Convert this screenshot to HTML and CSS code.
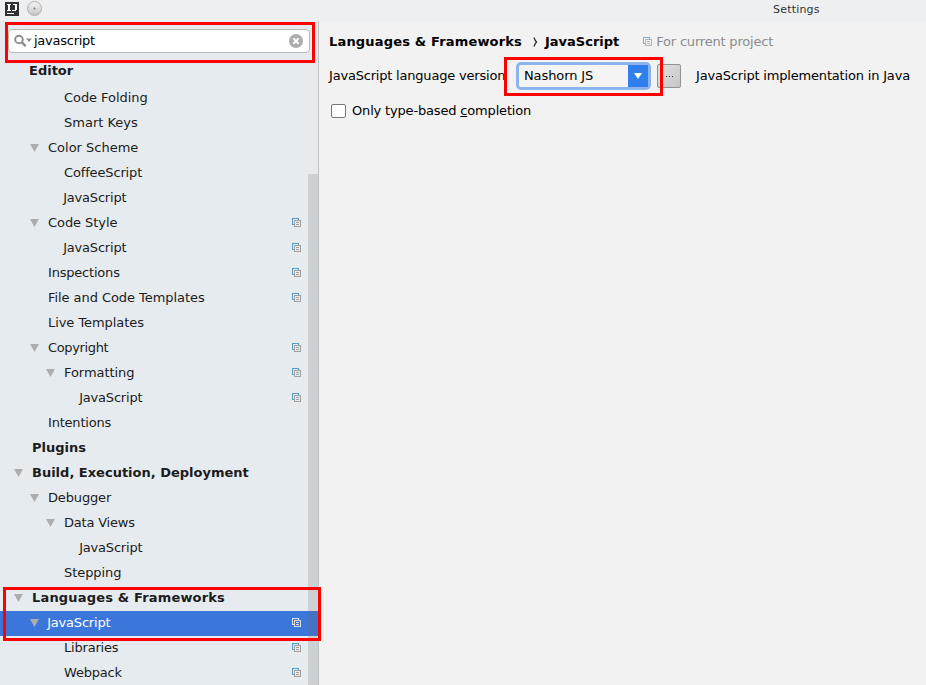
FILE: index.html
```html
<!DOCTYPE html>
<html lang="en">
<head>
<meta charset="utf-8">
<title>Settings</title>
<link rel="stylesheet" href="styles.css">
</head>
<body>
<svg class="defs" width="0" height="0">
  <symbol id="copy" viewBox="0 0 9 9">
    <path class="back" d="M0 0h7v2h-1v-1h-5v5h1v1h-2z"/>
    <path class="front" fill-rule="evenodd" d="M2 2h7v7h-7zM3 3v5h5v-5zM4 4h3v1h-3zM4 6h3v1h-3z"/>
  </symbol>
  <symbol id="arrow" viewBox="0 0 9 8"><path d="M0 0h9l-4.500 8z"/></symbol>
</svg>
<div class="window">
  <header class="titlebar">
    <svg class="logo" width="14" height="14" viewBox="0 0 14 14"><path fill="#303234" d="M0 0h14v14H0z"/><path fill="#fff" d="M2 2h4v1H5v5h1v1H2V8h1V3H2zM8 2h4v6h-1v1H7V8h3V3H8zM2 11h7v1H2z"/></svg>
    <span class="orb"></span>
    <span class="title">Settings</span>
  </header>
  <div class="body">
    <aside class="sidebar">
      <div class="search">
        <svg class="magnifier" width="19" height="14" viewBox="0 0 19 14"><circle cx="5" cy="5.500" r="3.800" fill="none" stroke="#8c8c8c" stroke-width="1.900"/><path d="M7.800 8.300l3.900 3.900" stroke="#8c8c8c" stroke-width="2.400"/><path fill="#8c8c8c" d="M12 4.500h6l-3 3.500z"/></svg>
        <span class="query">javascript</span>
        <svg width="14" height="14" viewBox="0 0 14 14"><circle cx="7" cy="7" r="7" fill="#adadad"/><path d="M4.300 4.300l5.400 5.400M9.700 4.300l-5.400 5.400" stroke="#fff" stroke-width="2"/></svg>
      </div>
      <div class="sticky">Editor</div>
      <div class="tree">
        <div class="row l3"><span class="slight">Code Folding</span></div>
        <div class="row l3"><span>Smart Keys</span></div>
        <div class="row l2"><svg class="arrow"><use href="#arrow"/></svg><span>Color Scheme</span></div>
        <div class="row l3"><span class="snug">CoffeeScript</span></div>
        <div class="row l3"><span class="js">JavaScript</span></div>
        <div class="row l2"><svg class="arrow"><use href="#arrow"/></svg><span class="slight">Code Style</span><svg class="copy"><use href="#copy"/></svg></div>
        <div class="row l3"><span class="js">JavaScript</span><svg class="copy"><use href="#copy"/></svg></div>
        <div class="row l2"><span class="tight">Inspections</span><svg class="copy"><use href="#copy"/></svg></div>
        <div class="row l2"><span class="slight">File and Code Templates</span><svg class="copy"><use href="#copy"/></svg></div>
        <div class="row l2"><span class="slight">Live Templates</span></div>
        <div class="row l2"><svg class="arrow"><use href="#arrow"/></svg><span class="tighter">Copyright</span><svg class="copy"><use href="#copy"/></svg></div>
        <div class="row l3"><svg class="arrow"><use href="#arrow"/></svg><span class="slight">Formatting</span><svg class="copy"><use href="#copy"/></svg></div>
        <div class="row l4"><span class="js">JavaScript</span><svg class="copy"><use href="#copy"/></svg></div>
        <div class="row l2"><span class="tight">Intentions</span></div>
        <div class="row l1"><span>Plugins</span></div>
        <div class="row l1"><svg class="arrow"><use href="#arrow"/></svg><span>Build, Execution, Deployment</span></div>
        <div class="row l2"><svg class="arrow"><use href="#arrow"/></svg><span class="snug">Debugger</span></div>
        <div class="row l3"><svg class="arrow"><use href="#arrow"/></svg><span class="tight">Data Views</span></div>
        <div class="row l4"><span class="js">JavaScript</span></div>
        <div class="row l3"><span class="slight">Stepping</span></div>
        <div class="row l1"><svg class="arrow"><use href="#arrow"/></svg><span class="wide">Languages &amp; Frameworks</span></div>
        <div class="row l2 selected"><svg class="arrow"><use href="#arrow"/></svg><span class="js">JavaScript</span><svg class="copy"><use href="#copy"/></svg></div>
        <div class="row l3"><span class="tight">Libraries</span><svg class="copy"><use href="#copy"/></svg></div>
        <div class="row l3"><span class="tight">Webpack</span><svg class="copy"><use href="#copy"/></svg></div>
      </div>
      <div class="scrollbar"></div>
    </aside>
    <main class="content">
      <div class="crumbs">
        <b class="wide">Languages &amp; Frameworks</b>
        <svg class="chevron" width="5" height="10" viewBox="0 0 5 10"><path d="M1 .5q1 3 2.500 4.500q-1.500 1.500-2.500 4.500" fill="none" stroke="#222" stroke-width="1.200"/></svg>
        <b>JavaScript</b>
        <svg class="copy faded"><use href="#copy"/></svg>
        <span class="scope">For current project</span>
      </div>
      <div class="version">
        <span class="label">JavaScript language version</span>
        <div class="select"><span>Nashorn JS</span><i><svg width="8" height="6" viewBox="0 0 8 6"><path fill="#fff" d="M0 0h8l-4 6z"/></svg></i></div>
        <button class="more"><i></i><i></i><i></i></button>
        <span class="note">JavaScript implementation in Java</span>
      </div>
      <div class="check"><span class="box"></span><span>Only type-based <u>c</u>ompletion</span></div>
    </main>
  </div>
  <div class="mark mark-search"></div>
  <div class="mark mark-version"></div>
  <div class="mark mark-tree"></div>
</div>
</body>
</html>
```

FILE: styles.css
```css
* { box-sizing: border-box; }
body { margin: 0; font: 13px/16px "DejaVu Sans", sans-serif; color: #1c1c1c; }
svg { display: block; flex: none; }
.defs { position: absolute; }
.window { position: relative; width: 926px; height: 685px; overflow: hidden; display: flex; flex-direction: column; background: #f2f2f2; }
.titlebar { height: 21px; flex: none; display: flex; align-items: flex-start; padding: 1px 0 0 5px; background: #eeeff1; }
.logo { margin-top: 1px; }
.orb { width: 15px; height: 15px; margin: 0 0 0 8px; border: 1px solid #b0b0b0; border-radius: 50%; background: radial-gradient(circle, #888 0 .8px, transparent 1.3px), linear-gradient(#f5f5f5, #c5c5c5); }
.title { margin-left: 731px; font-size: 11px; letter-spacing: .2px; line-height: 17px; color: #303234; }
.body { flex: 1; min-height: 0; display: flex; }
.sidebar { position: relative; width: 319px; flex: none; border-right: 1px solid #c0c1c3; background: #e6ebef; padding-top: 8px; }
.search { display: flex; align-items: center; width: 302px; height: 24px; margin-left: 8px; padding: 0 6px 0 5px; border: 1px solid #b9b9b9; border-radius: 4px; background: #fff; color: #000; }
.query { flex: 1; margin-left: 1px; letter-spacing: -.25px; }
.sticky { height: 33px; padding: 10px 0 0 29px; font-weight: bold; }
.row { display: flex; align-items: center; height: 25px; padding: 0 17px 2px 0; }
.row .copy { margin-left: auto; }
.l1 { padding-left: 32px; font-weight: bold; }
.l2 { padding-left: 48px; }
.l3 { padding-left: 64px; }
.l4 { padding-left: 80px; }
.slight { letter-spacing: -.06px; }
.snug { letter-spacing: -.15px; }
.tight { letter-spacing: -.2px; }
.tighter { letter-spacing: -.35px; }
.wide { letter-spacing: .17px; }
.js { letter-spacing: -.2px; text-indent: -.8px; }
.arrow { width: 9px; height: 8px; margin: 0 9px 0 -18px; fill: #adadad; }
.copy { width: 9px; height: 9px; --back: #5a9bc2; --front: #a0a0a0; }
.back { fill: var(--back); }
.front { fill: var(--front); }
.selected { background: #3b76da; color: #fff; }
.selected .copy { --back: #dce4ee; --front: #dcdcdc; }
.scrollbar { position: absolute; top: 153px; right: 0; bottom: 0; width: 10px; background: rgba(105, 105, 105, .2); }
.content { flex: 1; padding: 12px 0 0 10px; color: #000; }
.crumbs { display: flex; align-items: center; height: 17px; white-space: nowrap; }
.chevron { margin: 0 7px 0 11px; }
.faded { margin: 0 4px 0 24px; opacity: .75; }
.scope { color: #8c8c8c; letter-spacing: -.2px; }
.version { display: flex; align-items: center; height: 30px; margin-top: 11px; white-space: nowrap; }
.label { width: 187px; letter-spacing: -.2px; }
.select { display: flex; width: 135px; height: 28px; border: 3px solid #8cb3eb; border-radius: 5px; background: #f4f4f4; }
.select span { flex: 1; padding: 3px 0 0 5px; letter-spacing: -.1px; }
.select i { width: 20px; display: flex; align-items: center; justify-content: center; background: #2f80ed; }
.more { display: flex; align-items: center; justify-content: center; gap: 2px; width: 24px; height: 24px; margin: 0 15px 0 6px; padding: 0; border: 1px solid #929292; border-radius: 2px; background: linear-gradient(135deg, #e2e2e2, #c6c6c6); }
.more i { width: 1px; height: 1px; background: #333; }
.note { letter-spacing: -.18px; }
.check { display: flex; align-items: center; height: 16px; margin-top: 12px; padding-left: 2px; letter-spacing: -.17px; }
.box { width: 15px; height: 14px; margin-right: 6px; border: 1px solid #777; border-radius: 2px; background: #fff; }
.mark { position: absolute; border: 3px solid #f00; }
.mark-search { left: 5px; top: 22px; width: 310px; height: 41px; }
.mark-version { left: 504px; top: 57px; width: 159px; height: 39px; }
.mark-tree { left: 3px; top: 587px; width: 318px; height: 54px; }
```
